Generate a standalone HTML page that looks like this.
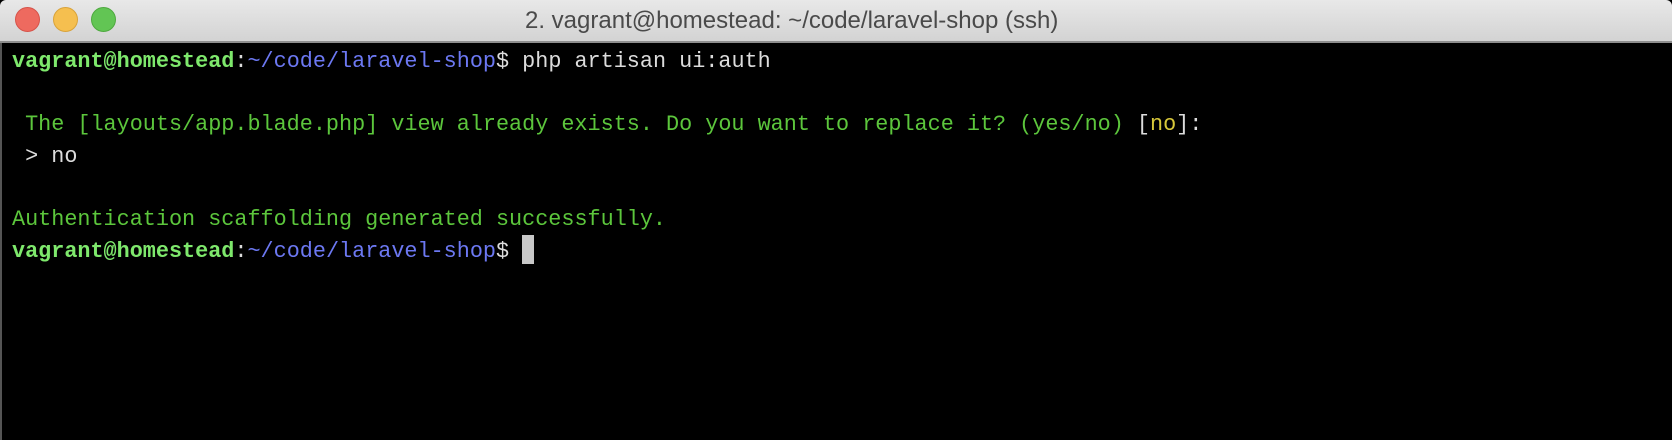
<!DOCTYPE html>
<html><head><meta charset="utf-8"><style>
html,body{margin:0;padding:0;width:1672px;height:440px;overflow:hidden;background:#000;}
.tb{position:absolute;left:0;top:0;width:1672px;height:41px;background:linear-gradient(#e8e8e8,#d3d3d3);border-bottom:2px solid #8e8e8e;border-radius:6px 6px 0 0;}
.dot{position:absolute;top:7px;width:23px;height:23px;border-radius:50%;}
.title{position:absolute;left:525px;top:7px;font:24px "Liberation Sans",sans-serif;color:#4a4a4a;white-space:nowrap;}
.term{position:absolute;left:12px;top:46px;font-family:"Liberation Mono",monospace;font-size:21.8px;line-height:31.5px;white-space:pre;color:#dcdcdc;}
.lb{position:absolute;left:0;top:43px;width:2px;height:397px;background:#555;}
.g{color:#7ee86c;font-weight:bold}
.b{color:#6c78f2}
.t{color:#5cc63c}
.y{color:#d8c83a}
.cur{display:inline-block;width:12px;height:29px;background:#c8c8c8;vertical-align:-7px;}
</style></head><body>
<div class="tb">
<div class="dot" style="left:15px;background:#ee6a5f;border:1px solid #d6534a"></div>
<div class="dot" style="left:53px;background:#f5bf4f;border:1px solid #d9a33a"></div>
<div class="dot" style="left:91px;background:#62c554;border:1px solid #4ea93f"></div>
<div class="title">2. vagrant@homestead: ~/code/laravel-shop (ssh)</div>
</div>
<div class="lb"></div>
<div class="term"><span class="g">vagrant@homestead</span>:<span class="b">~/code/laravel-shop</span>$ php artisan ui:auth

<span class="t"> The [layouts/app.blade.php] view already exists. Do you want to replace it? (yes/no)</span> [<span class="y">no</span>]:
 &gt; no

<span class="t">Authentication scaffolding generated successfully.</span>
<span class="g">vagrant@homestead</span>:<span class="b">~/code/laravel-shop</span>$ <span class="cur"></span></div>
</body></html>
